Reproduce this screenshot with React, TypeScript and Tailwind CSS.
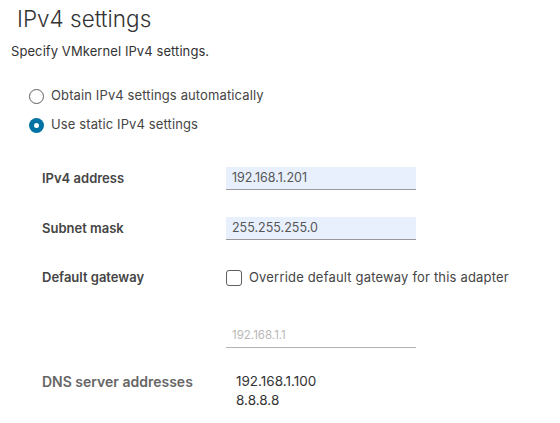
import { useState } from "react";

function Radio({ checked, label }: { checked: boolean; label: string }) {
  return (
    <label className="flex items-center h-[20px]">
      {checked ? (
        <span className="w-[15px] h-[15px] rounded-full bg-[#0072a3] flex items-center justify-center shrink-0">
          <span className="w-[5px] h-[5px] rounded-full bg-white" />
        </span>
      ) : (
        <span className="w-[15px] h-[15px] rounded-full border border-[#5e5e5e] bg-white shrink-0" />
      )}
      <span className="ml-[7px] text-[13px] tracking-[0.12px] text-[#454545]">{label}</span>
    </label>
  );
}

function Field({ value }: { value: string }) {
  return (
    <div className="w-[190px] h-[23px] bg-[#e8f0fe] border-b border-[#9a9a9a] flex items-center pl-[6px] text-[12.5px] text-[#565656]">
      {value}
    </div>
  );
}

export default function App() {
  const [override] = useState(false);

  return (
    <div className="w-[560px] h-[423px] bg-white overflow-hidden font-['Inter',sans-serif] text-[#454545]">
      <h1 className="ml-[17px] pt-[3px] h-[34px] text-[22.5px] leading-[32px] font-light text-[#333]">
        IPv4 settings
      </h1>
      <p className="ml-[11px] mt-[8px] text-[13px] tracking-[0.08px] leading-[18px] text-[#333]">
        Specify VMkernel IPv4 settings.
      </p>

      <div className="ml-[29px] mt-[26px] flex flex-col gap-[9px]">
        <Radio checked={false} label="Obtain IPv4 settings automatically" />
        <Radio checked={true} label="Use static IPv4 settings" />
      </div>

      <div className="ml-[42px] mt-[32px] grid grid-cols-[184px_1fr] items-center">
        <div className="text-[13px] font-semibold">IPv4 address</div>
        <Field value="192.168.1.201" />

        <div className="col-span-2 h-[27px]" />

        <div className="text-[13px] font-semibold">Subnet mask</div>
        <Field value="255.255.255.0" />

        <div className="col-span-2 h-[28px]" />

        <div className="text-[13px] font-semibold">Default gateway</div>
        <label className="flex items-center h-[20px]">
          <span
            className={`w-[16px] h-[16px] rounded-[3px] border border-[#5e5e5e] shrink-0 ${
              override ? "bg-[#0072a3]" : "bg-white"
            }`}
          />
          <span className="ml-[7px] text-[13px] tracking-[0.18px]">
            Override default gateway for this adapter
          </span>
        </label>

        <div className="col-span-2 h-[37px]" />

        <div />
        <div className="w-[190px] h-[23px] border-b border-[#b3b3b3] flex items-center pl-[6px] text-[11.5px] text-[#b8b8b8]">
          192.168.1.1
        </div>

        <div className="col-span-2 h-[24px]" />

        <div className="self-start text-[14px] font-semibold text-[#666] leading-[19px]">
          DNS server addresses
        </div>
        <div className="pl-[10px] text-[13.5px] leading-[19px] text-[#333]">
          <div>192.168.1.100</div>
          <div>8.8.8.8</div>
        </div>
      </div>
    </div>
  );
}
